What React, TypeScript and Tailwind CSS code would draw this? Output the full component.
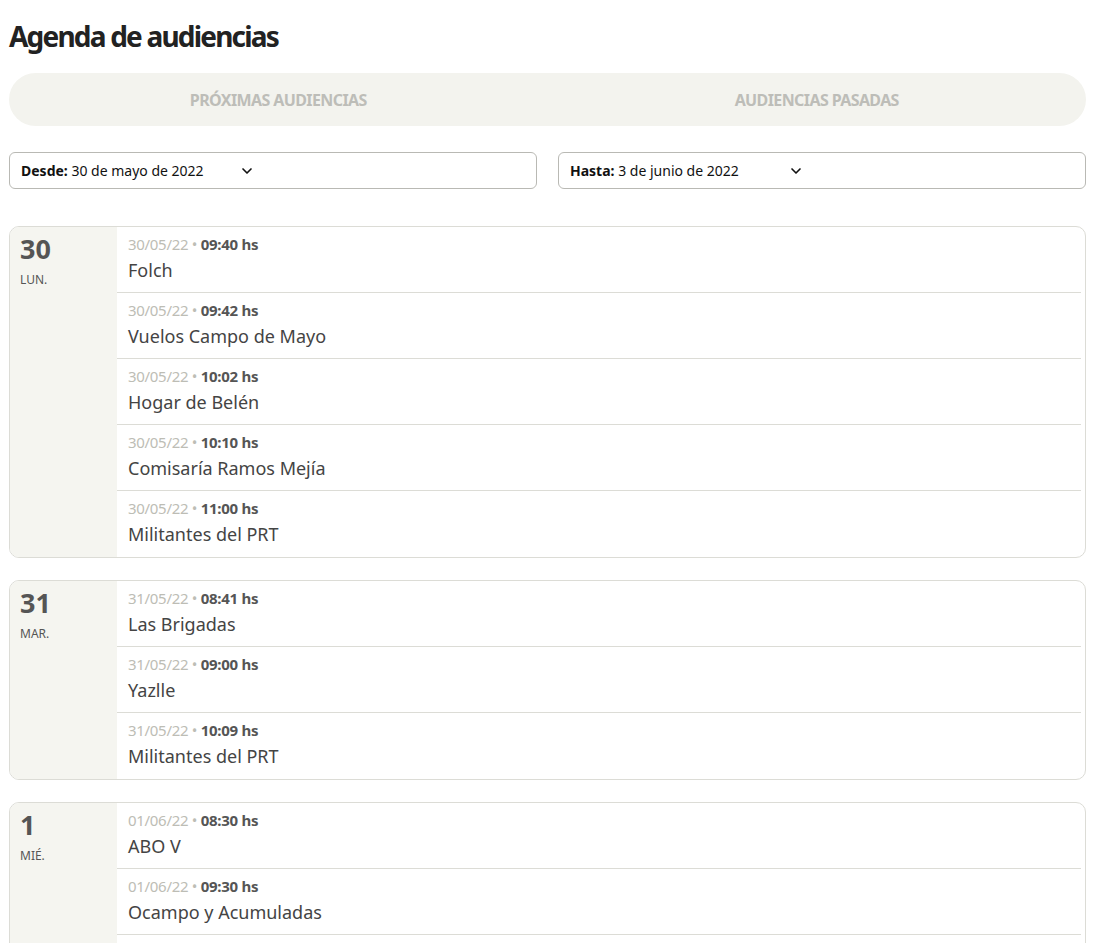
import { ChevronDown } from 'lucide-react'

type Hearing = { date: string; time: string; title: string }
type Day = { num: string; weekday: string; items: Hearing[] }

const days: Day[] = [
  {
    num: '30',
    weekday: 'LUN.',
    items: [
      { date: '30/05/22', time: '09:40 hs', title: 'Folch' },
      { date: '30/05/22', time: '09:42 hs', title: 'Vuelos Campo de Mayo' },
      { date: '30/05/22', time: '10:02 hs', title: 'Hogar de Belén' },
      { date: '30/05/22', time: '10:10 hs', title: 'Comisaría Ramos Mejía' },
      { date: '30/05/22', time: '11:00 hs', title: 'Militantes del PRT' },
    ],
  },
  {
    num: '31',
    weekday: 'MAR.',
    items: [
      { date: '31/05/22', time: '08:41 hs', title: 'Las Brigadas' },
      { date: '31/05/22', time: '09:00 hs', title: 'Yazlle' },
      { date: '31/05/22', time: '10:09 hs', title: 'Militantes del PRT' },
    ],
  },
  {
    num: '1',
    weekday: 'MIÉ.',
    items: [
      { date: '01/06/22', time: '08:30 hs', title: 'ABO V' },
      { date: '01/06/22', time: '09:30 hs', title: 'Ocampo y Acumuladas' },
      { date: '01/06/22', time: '10:00 hs', title: 'Hospital Posadas' },
    ],
  },
]

const DateSelect = ({ label, value }: { label: string; value: string }) => (
  <div className="flex h-[37px] flex-1 items-center rounded-[6px] border border-[#b9b9b4] pl-[11px] text-[14px] text-[#111]">
    <span className="w-[218px]">
      <span className="font-bold">{label}:</span> {value}
    </span>
    <ChevronDown size={16} strokeWidth={2.5} className="text-[#111]" />
  </div>
)

const DayCard = ({ day }: { day: Day }) => (
  <div className="flex overflow-hidden rounded-[10px] border border-[#dcdcd6]">
    <div className="w-[107px] shrink-0 bg-[#f5f5f0] pl-[10px] pt-[5px]">
      <div className="text-[27px] font-bold leading-[34px] text-[#555]">{day.num}</div>
      <div className="mt-[5px] text-[12px] text-[#555]">{day.weekday}</div>
    </div>
    <div className="flex-1 pr-[4px]">
      {day.items.map((h, i) => (
        <div
          key={h.time + h.title}
          className={`h-[66px] pl-[11px] pt-[7px] ${i < day.items.length - 1 ? 'border-b border-[#dcdcd6]' : ''}`}
        >
          <div className="text-[15px] leading-[20px] tracking-[-0.3px]">
            <span className="text-[#bdbdb5]">{h.date}</span>
            <span className="text-[#bdbdb5]"> • </span>
            <span className="font-bold text-[#555]">{h.time}</span>
          </div>
          <div className="mt-[4px] text-[18px] leading-[24px] text-[#444]">{h.title}</div>
        </div>
      ))}
    </div>
  </div>
)

export default function App() {
  return (
    <div className="min-h-screen bg-white pl-[9px] pr-[10px] pt-[16px] font-['Noto_Sans','Open_Sans',sans-serif]">
      <h1 className="text-[28px] font-bold leading-[40px] tracking-[-1.8px] text-[#222]">Agenda de audiencias</h1>

      <div className="mt-[17px] flex h-[53px] rounded-full bg-[#f3f3ee] text-[16px] font-bold tracking-[-0.6px] text-[#bdbdb8]">
        <button className="flex-1">PRÓXIMAS AUDIENCIAS</button>
        <button className="flex-1">AUDIENCIAS PASADAS</button>
      </div>

      <div className="mt-[26px] flex gap-[21px]">
        <DateSelect label="Desde" value="30 de mayo de 2022" />
        <DateSelect label="Hasta" value="3 de junio de 2022" />
      </div>

      <div className="mt-[37px] flex flex-col gap-[22px]">
        {days.map((d) => (
          <DayCard key={d.num} day={d} />
        ))}
      </div>
    </div>
  )
}
